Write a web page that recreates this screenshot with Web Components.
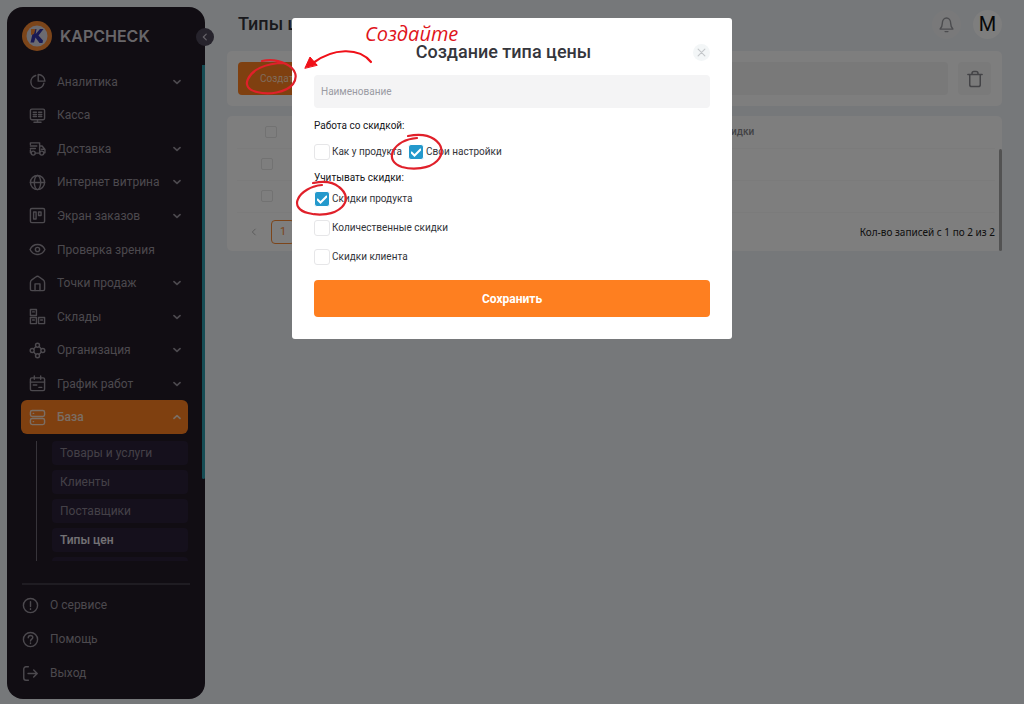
<!DOCTYPE html>
<html lang="ru">
<head>
<meta charset="utf-8">
<title>Kapcheck — Типы цен</title>
<style>
body{margin:0;background:#ecf0f4;font:12px/16px Roboto,"Noto Sans",sans-serif;color:#222}
</style>
</head>
<body>
<kc-app></kc-app>
<script>
const ICONS = {
  pie:'<path d="M9.500 3.500a9.300 9.300 0 1 0 11.500 11"/><path d="M13 2v9.500h9.500a9.500 9.500 0 0 0-9.500-9.500z"/>',
  desk:'<rect x="2" y="3" width="20" height="15" rx="2"/><path d="M12 18v3M7 21.500h10M6 7.500h4.500M6 10.500h4.500M6 13.500h4.500M13.500 7.500H18M13.500 10.500H18M13.500 13.500H18"/>',
  truck:'<path d="M2 6.500V4h13v13.500M2 8.500h9M2 12h7M2 14v4h1M15 8.500h3.500l4 5V18H21M17.500 13H22"/><circle cx="6" cy="18.500" r="2.800"/><circle cx="18" cy="18.500" r="2.800"/><path d="M9 18.500h6"/>',
  globe:'<circle cx="12" cy="12" r="10"/><ellipse cx="12" cy="12" rx="4.500" ry="10"/><path d="M2 12h20"/>',
  board:'<rect x="2" y="2" width="20" height="20" rx="2"/><rect x="6.500" y="7" width="3.500" height="10"/><rect x="13.500" y="7" width="3.500" height="5"/>',
  eye:'<path d="M1.500 12C6 2.500 18 2.500 22.500 12 18 21.500 6 21.500 1.500 12z"/><circle cx="12" cy="12" r="3"/>',
  home:'<path d="M2 11c0-2 .5-3 2-4.200l5.500-4a4 4 0 0 1 5 0l5.500 4c1.500 1.200 2 2.200 2 4.200v9a2 2 0 0 1-2 2H4a2 2 0 0 1-2-2z"/><path d="M8.500 22v-9.500h7V22"/>',
  boxes:'<rect x="2" y="2" width="8.500" height="8.500"/><rect x="2" y="13.500" width="8.500" height="8.500"/><rect x="13.500" y="13.500" width="8.500" height="8.500"/><path d="M5 5.500h2.500M5 17h2.500M16.500 17H19"/>',
  org:'<circle cx="12" cy="4.500" r="2.800"/><circle cx="12" cy="19.500" r="2.800"/><circle cx="4.500" cy="12" r="2.800"/><circle cx="19.500" cy="12" r="2.800"/><path d="m6.500 9.800 3.300-3.300M14.200 6.500l3.300 3.300M17.500 14.200l-3.300 3.300M9.800 17.500l-3.300-3.300"/>',
  cal:'<rect x="2" y="4" width="20" height="18" rx="2"/><path d="M2 10h20M7.500 1.500V6M16.500 1.500V6M6 14h5M14 17.500h4"/>',
  base:'<rect x="2" y="2" width="20" height="8.500" rx="2.500"/><rect x="2" y="13.500" width="20" height="8.500" rx="2.500"/><path d="M6 6.200h.5M6 17.800h.5"/>',
  info:'<circle cx="12" cy="12" r="10"/><path d="M12 6.500v7M12 16.500v1"/>',
  help:'<circle cx="12" cy="12" r="10"/><path d="M8.800 9.500c0-4.300 6.400-4 6.400-.3 0 2.400-3.200 2.300-3.200 5M12 17v.8"/>',
  exit:'<path d="M9 2.500H5.500a3 3 0 0 0-3 3v13a3 3 0 0 0 3 3H9M8.500 12H21M16.500 7l5 5-5 5"/>',
  down:'<path d="m3 8 9 8 9-8"/>',
  up:'<path d="m3 16 9-8 9 8"/>',
  left:'<path d="m15 5-7 7 7 7"/>',
  bell:'<path d="M3 18.500c2-2 3-3 3-7.500 0-11 12-11 12 0 0 4.500 1 5.500 3 7.500zM10 22h4"/>',
  trash:'<path d="M5 6h14v13.500a2.500 2.500 0 0 1-2.500 2.500h-9A2.500 2.500 0 0 1 5 19.500zM2.500 6h19M8 6V4.500A2.500 2.500 0 0 1 10.500 2h3A2.500 2.500 0 0 1 16 4.500V6"/>',
  close:'<path d="m3 3 18 18M21 3 3 21"/>'
};
const icon = (name, size, width = 2) =>
  `<svg viewBox="0 0 24 24" width="${size}" height="${size}" fill="none" stroke="currentColor" stroke-width="${width}" stroke-linecap="round" stroke-linejoin="round" aria-hidden="true">${ICONS[name]}</svg>`;

const BASE = `<style>
*{box-sizing:border-box}
button,input{font:inherit;color:inherit;margin:0}
button{border:0;padding:0;cursor:pointer}
a{color:inherit;text-decoration:none}
svg{display:block;flex:none}
</style>`;

function define(name, render) {
  customElements.define(name, class extends HTMLElement {
    constructor() {
      super();
      this.attachShadow({mode: 'open'});
    }
    connectedCallback() {
      this.shadowRoot.innerHTML = BASE + render(this);
    }
  });
}

define('kc-nav-item', el => `<style>
:host{display:flex;flex:1;min-height:32px;color:#98929c}
a{flex:1;display:flex;align-items:center;gap:11px;padding:0 7px 0 8px;border-radius:6px}
span{flex:1;white-space:nowrap;font-size:12px}
:host([active]) a{background:#ff8020;color:#f6dcc8;font-weight:500}
</style>
<a href="#">${icon(el.getAttribute('icon'), 17)}<span><slot></slot></span>${el.hasAttribute('leaf') ? '' : icon(el.hasAttribute('active') ? 'up' : 'down', 8, 5)}</a>`);

define('kc-sub-item', () => `<style>
:host{display:block;color:#88818f}
a{display:block;padding:4px 8px;border-radius:4px;background:#2a2038;font-size:12px;line-height:16px}
:host([active]){color:#e8e4ea;font-weight:500}
</style><a href="#"><slot></slot></a>`);

define('kc-foot-item', el => `<style>
:host{display:block;color:#98929c}
a{display:flex;align-items:center;gap:11px;height:34px;font-size:12px}
</style><a href="#">${icon(el.getAttribute('icon'), 17)}<slot></slot></a>`);

define('kc-sidebar', () => `<style>
:host{position:relative;display:flex;flex-direction:column;flex:none;width:198px;background:#221a26;border-radius:16px;padding-bottom:9px}
header{display:flex;align-items:center;gap:8px;height:58px;padding-left:15px;color:#d0ccd2;font:600 16px/20px Inter,sans-serif}
.scroll{position:relative;flex:1;display:flex;flex-direction:column;padding:0 17px 0 14px}
.scroll::after{content:"";position:absolute;right:0;top:0;width:3px;height:80%;background:#2a98a8;border-radius:0 0 2px 2px}
nav{flex:1;display:flex;flex-direction:column}
.sub{display:flex;flex-direction:column;gap:5px;height:120px;overflow:hidden;margin:7px 0 22px 15px;padding-left:15px;border-left:1px solid #6e6874}
footer{margin:0 15px;border-top:2px solid #3e3944;padding-top:3px}
.toggle{position:absolute;right:-9px;top:21px;width:18px;height:18px;border-radius:50%;background:#4c4658;color:#c8c2ce;display:grid;place-items:center}
</style>
<header>
<svg viewBox="0 0 30 30" width="30" height="30" aria-hidden="true"><circle cx="15" cy="15" r="15" fill="#f98a35"/><circle cx="15" cy="15" r="10.500" fill="#d8d6e0"/><path d="M11.500 8h3l-.8 5L18 8h3.500l-5 6.500 4.500 5-.5 2.500h-3l-4-5.500L12 21.500H8.500L10 15z" fill="#3434a8"/><path d="m9 8 4.500 0-1.500 5-3 1z" fill="#f98a35"/></svg>
<span>KAPCHECK</span></header>
<div class="scroll">
<nav aria-label="Главное меню">
<kc-nav-item icon="pie">Аналитика</kc-nav-item>
<kc-nav-item icon="desk" leaf>Касса</kc-nav-item>
<kc-nav-item icon="truck">Доставка</kc-nav-item>
<kc-nav-item icon="globe">Интернет витрина</kc-nav-item>
<kc-nav-item icon="board">Экран заказов</kc-nav-item>
<kc-nav-item icon="eye" leaf>Проверка зрения</kc-nav-item>
<kc-nav-item icon="home">Точки продаж</kc-nav-item>
<kc-nav-item icon="boxes">Склады</kc-nav-item>
<kc-nav-item icon="org">Организация</kc-nav-item>
<kc-nav-item icon="cal">График работ</kc-nav-item>
<kc-nav-item icon="base" active>База</kc-nav-item>
</nav>
<div class="sub">
<kc-sub-item>Товары и услуги</kc-sub-item>
<kc-sub-item>Клиенты</kc-sub-item>
<kc-sub-item>Поставщики</kc-sub-item>
<kc-sub-item active>Типы цен</kc-sub-item>
<kc-sub-item>&nbsp;</kc-sub-item>
</div>
</div>
<footer>
<kc-foot-item icon="info">О сервисе</kc-foot-item>
<kc-foot-item icon="help">Помощь</kc-foot-item>
<kc-foot-item icon="exit">Выход</kc-foot-item>
</footer>
<button class="toggle" aria-label="Свернуть меню">${icon('left', 10, 3)}</button>`);

define('kc-topbar', () => `<style>
:host{display:flex;align-items:center;gap:12px;height:34px;padding-left:11px}
h1{flex:1;margin:0;font-size:18px;line-height:24px;font-weight:500;color:#32333a}
button{width:29px;height:29px;border-radius:50%;background:#f2f3f4;display:grid;place-items:center}
.bell{color:#98989e}
.user{font-size:20px;line-height:28px;color:#111;background:#fcfcfc}
</style><h1>Типы цен</h1>
<button class="bell" aria-label="Уведомления">${icon('bell', 17, 2)}</button>
<button class="user" aria-label="Профиль">M</button>`);

define('kc-toolbar', () => `<style>
:host{display:flex;gap:10px;padding:11px;background:#fcfcfc;border-radius:5px}
.create{height:33px;padding:0 22px;border-radius:4px;background:#ff8020;color:#ffd8b8;font-size:10px}
input{flex:1;min-width:0;border:0;border-radius:4px;background:#f2f2f2;padding:0 8px}
.del{width:33px;height:33px;border-radius:4px;background:#f5f5f5;color:#88888e;display:grid;place-items:center}
</style><button class="create">Создать</button><input type="search" aria-label="Поиск"><button class="del" aria-label="Удалить">${icon('trash', 18, 2)}</button>`);

define('kc-table', () => `<style>
:host{position:relative;display:block;background:#fcfcfc;border-radius:5px;padding:0 7px 0 10px}
:host::after{content:"";position:absolute;right:0;bottom:0;width:3px;height:102px;background:#a5a5a5;border-radius:2px}
table{width:100%;border-collapse:collapse;table-layout:fixed;font-size:10px;color:#85858a}
th,td{height:32px;padding:0;text-align:left;font-weight:500;border-bottom:1px solid #f7f7f7}
.pick{width:66px;padding-left:24px}
th.pick{padding-left:28px}
.name{width:310px}
.calc{padding-left:53px}
input{appearance:none;display:block;width:12px;height:12px;border:1px solid #e4e4e4;border-radius:2px}
footer{display:flex;align-items:center;gap:12px;height:38px;padding-left:12px}
.prev{background:none;color:#aaa}
.page{width:24px;height:24px;border:1px solid #f98a35;border-radius:4px;background:none;color:#f98a35;font-size:11px}
p{margin:0 0 0 auto;font:10px/16px "Noto Sans",sans-serif;color:#222}
</style>
<table>
<thead><tr><th class="pick"><input type="checkbox" aria-label="Выбрать все"></th><th class="name" aria-label="Наименование"></th><th class="calc">Учитывать скидки</th></tr></thead>
<tbody><tr><td class="pick"><input type="checkbox" aria-label="Выбрать строку 1"></td><td></td><td></td></tr>
<tr><td class="pick"><input type="checkbox" aria-label="Выбрать строку 2"></td><td></td><td></td></tr></tbody>
</table>
<footer><button class="prev" aria-label="Назад">${icon('left', 10, 2)}</button><button class="page">1</button><p>Кол-во записей с 1 по 2 из 2</p></footer>`);

define('kc-check', el => `<style>
:host{display:block}
label{display:flex;align-items:center;gap:2px;height:16px;font-size:10px;line-height:16px;color:#33343a;white-space:nowrap}
.box{position:relative;display:grid;width:16px;height:16px}
input{appearance:none;width:16px;height:16px;border:1px solid #e6e6e8;border-radius:3px;background:#fff}
input:checked{border-color:#fff;background:#2499cc}
svg{position:absolute;left:3px;top:3px;color:#fff;display:none;pointer-events:none}
input:checked + svg{display:block}
</style><label><span class="box"><input type="checkbox" ${el.hasAttribute('checked') ? 'checked' : ''}><svg viewBox="0 0 10 10" width="10" height="10" fill="none" stroke="currentColor" stroke-width="2" aria-hidden="true"><path d="m0 5 3.500 3.500L10 2"/></svg></span><slot></slot></label>`);

define('kc-notes', () => `<style>
:host{position:absolute;inset:0;pointer-events:none}
svg{width:440px;height:321px;overflow:visible}
span{position:absolute;left:73px;top:2px;font:italic 500 20px/28px "Open Sans",sans-serif;color:#e0141b}
</style>
<svg viewBox="292 18 440 321" fill="none" stroke="#e0202a" stroke-width="2.200" stroke-linecap="round" aria-hidden="true">
<path d="M262 61c9-2 18 0 24 3 10 5 12 13 7 20-7 9-25 11-36 8-9-2-12-7-9-13 4-9 17-16 36-16"/>
<path d="M408 136c10-2 20-1 26 3 9 6 10 15 3 22-8 8-24 9-35 6-9-3-12-9-9-16 4-7 12-12 24-13"/>
<path d="M313 183c10-2 20-1 26 4 8 6 9 14 3 20-8 8-23 9-34 6-9-2-13-8-10-14 3-7 13-13 24-14"/>
<path d="M371 62c-12-15-38-14-58 1" stroke="#f01018"/><path d="m305 68 5-11 7 8z" fill="#f01018" stroke="#f01018" stroke-width="1"/>
</svg><span>Создайте</span>`);

define('kc-modal', () => `<style>
:host{position:relative;display:block;width:440px;max-width:100%;background:#fff;border-radius:3px;padding:21px 22px 22px}
header{display:flex;align-items:center;height:26px}
h2{flex:1;margin:0;text-align:center;font-size:18px;line-height:24px;font-weight:500;color:#35363c}
.close{width:17px;height:17px;border-radius:50%;background:#f3f6f7;color:#c4c7ca;display:grid;place-items:center}
.name{display:block;width:100%;height:33px;margin-top:10px;border:0;border-radius:4px;background:#f4f4f5;padding:0 7px;font-size:10px}
.name::placeholder{color:#9a9ba3;opacity:1}
fieldset{border:0;margin:10px 0 0;padding:0;min-width:0}
legend{padding:0;font-size:10px;line-height:16px;color:#15161a}
.row{display:flex;gap:6px;margin-top:10px}
.list{display:grid;gap:13px;margin-top:5px}
.save{width:100%;height:37px;margin-top:15px;border-radius:4px;background:#fe7f20;color:#fff;font-size:12px;font-weight:700}
</style>
<header><h2>Создание типа цены</h2><button class="close" aria-label="Закрыть">${icon('close', 9, 3)}</button></header>
<input class="name" placeholder="Наименование" aria-label="Наименование">
<fieldset><legend>Работа со скидкой:</legend><div class="row"><kc-check>Как у продукта</kc-check><kc-check checked>Свои настройки</kc-check></div></fieldset>
<fieldset><legend>Учитывать скидки:</legend><div class="list"><kc-check checked>Скидки продукта</kc-check><kc-check>Количественные скидки</kc-check><kc-check>Скидки клиента</kc-check></div></fieldset>
<button class="save">Сохранить</button>
<kc-notes></kc-notes>`);

define('kc-app', () => `<style>
:host{display:flex;gap:22px;min-height:100vh;padding:7px 22px 5px 7px;box-sizing:border-box}
main{flex:1;min-width:0;display:flex;flex-direction:column;gap:10px}
.overlay{position:fixed;inset:0;background:rgba(0,0,0,.5);display:flex;justify-content:center;align-items:flex-start;padding-top:18px}
</style>
<kc-sidebar></kc-sidebar>
<main><kc-topbar></kc-topbar><kc-toolbar></kc-toolbar><kc-table></kc-table></main>
<div class="overlay"><kc-modal role="dialog" aria-label="Создание типа цены"></kc-modal></div>`);
</script>
</body>
</html>
